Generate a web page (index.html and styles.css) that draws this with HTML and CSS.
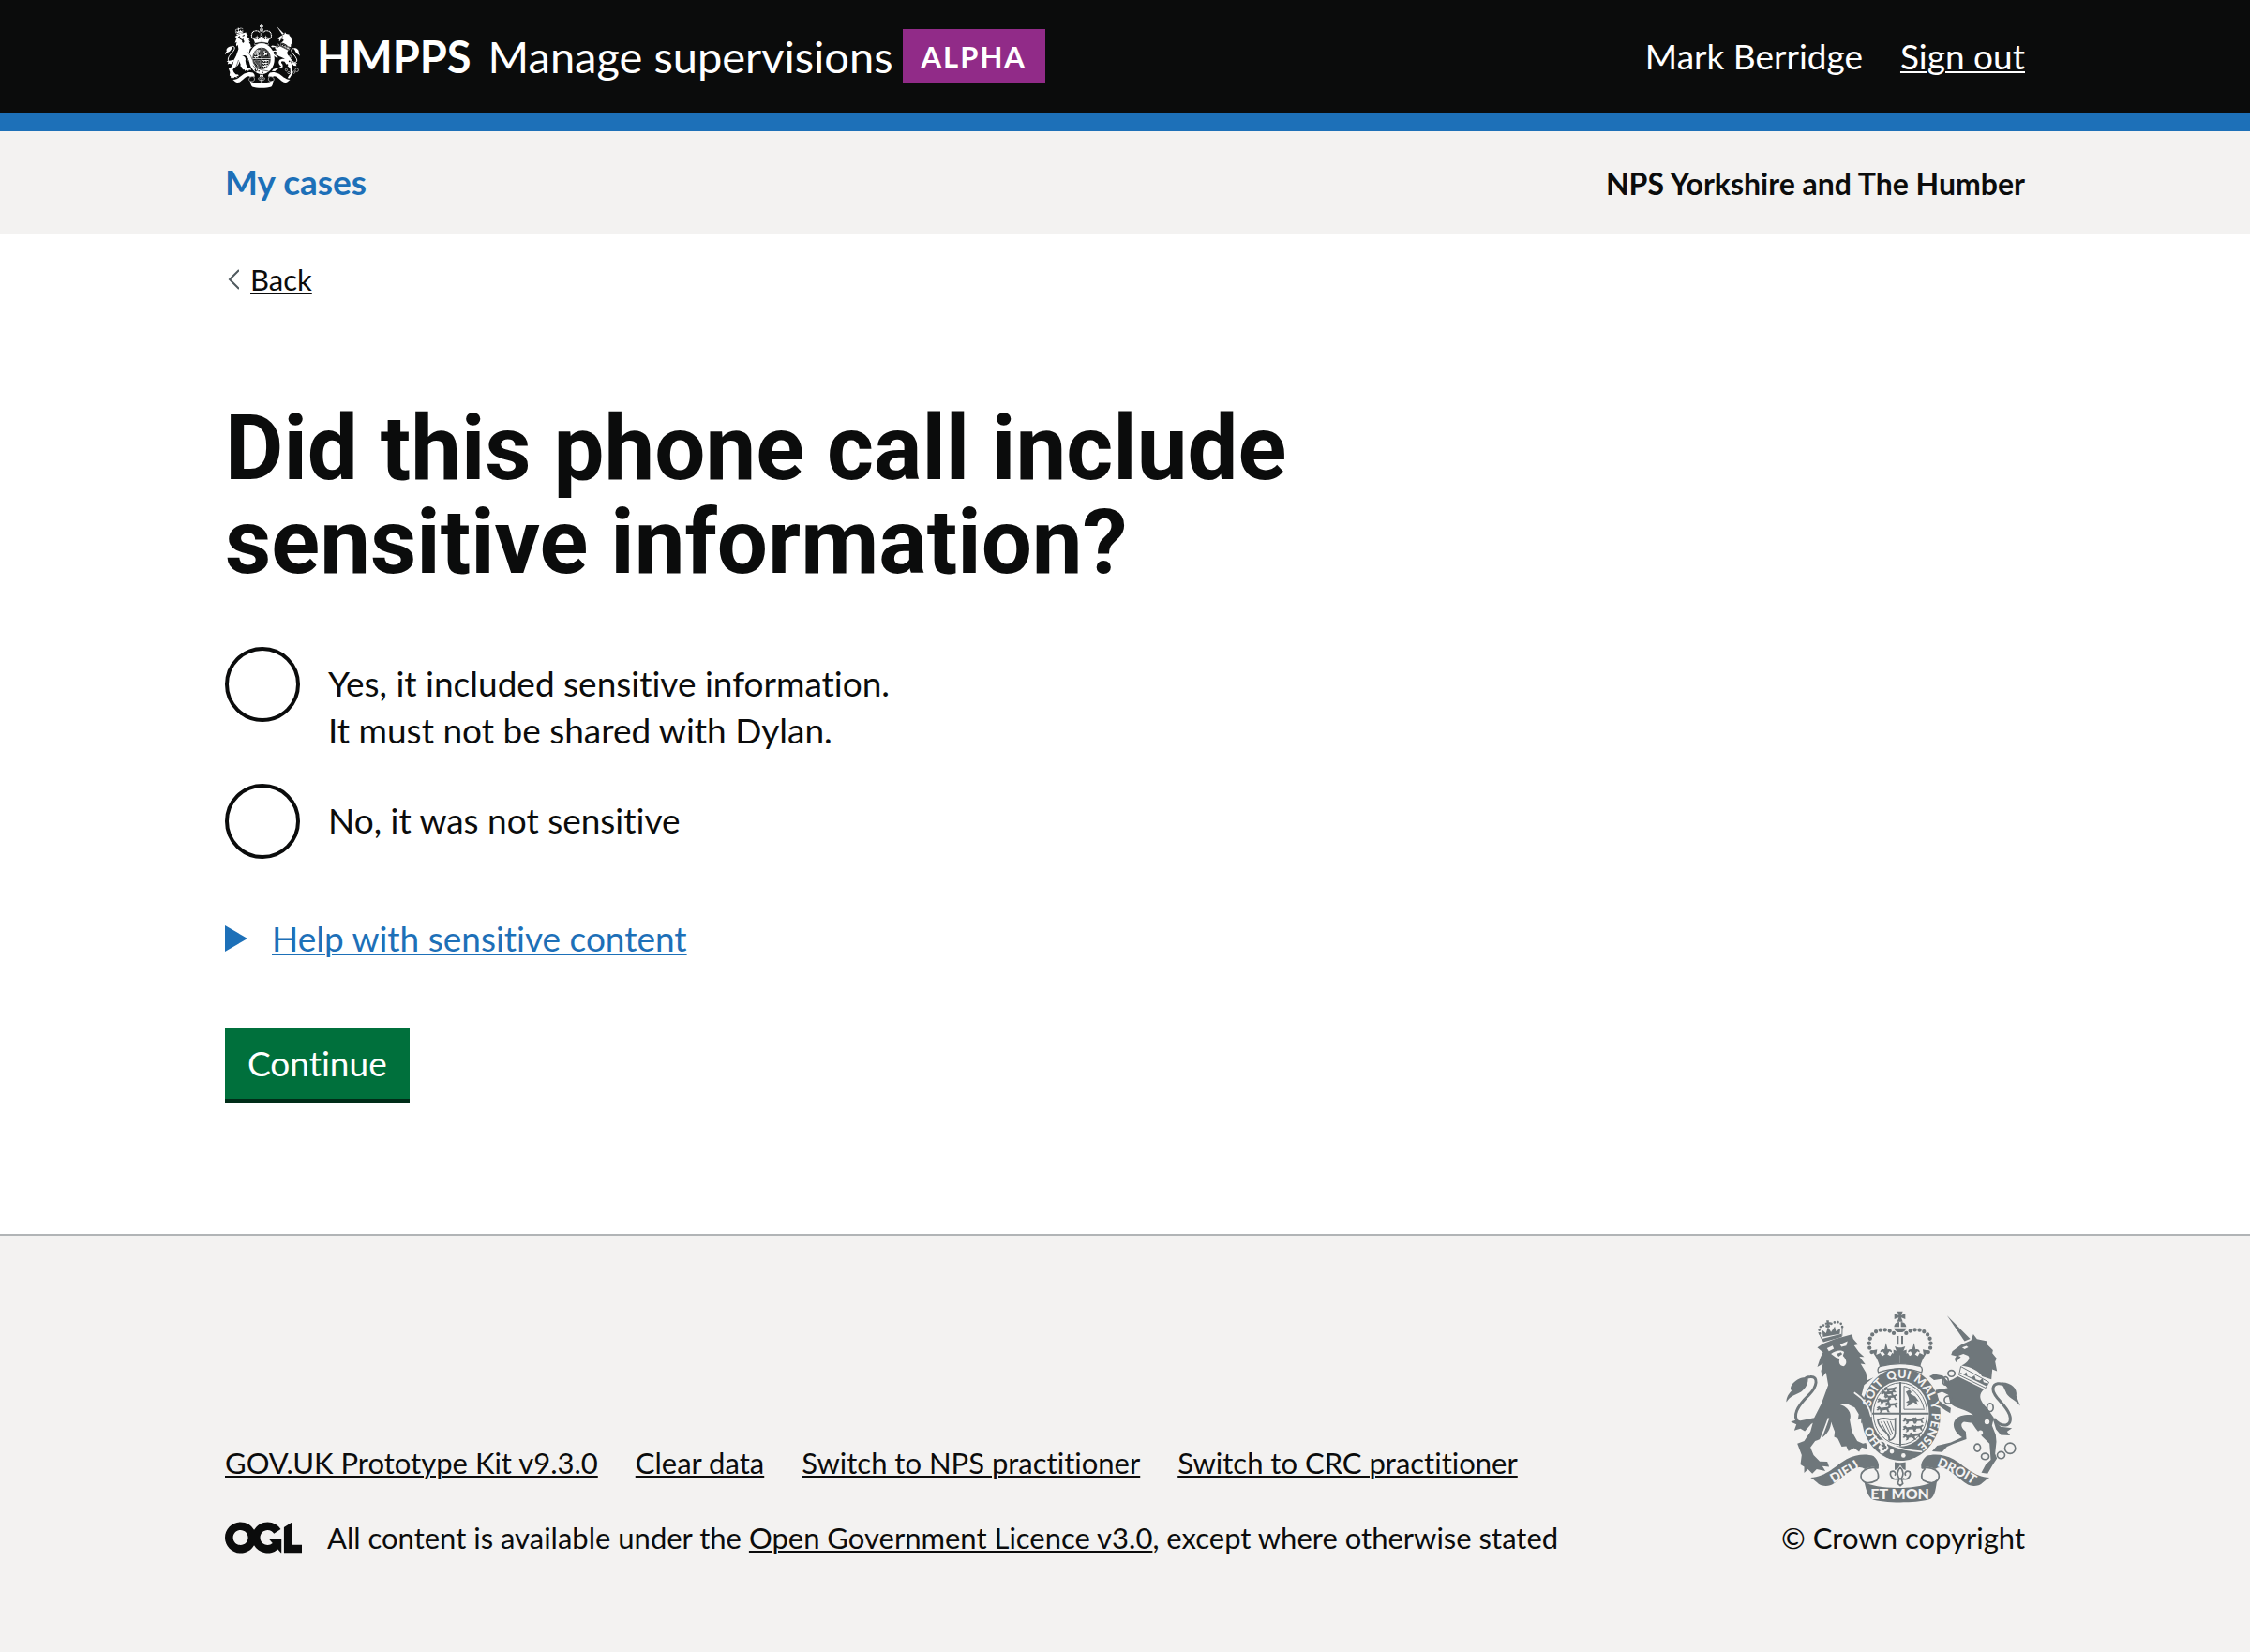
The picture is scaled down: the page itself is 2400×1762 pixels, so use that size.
FILE: index.html
```html
<!DOCTYPE html>
<html lang="en">
<head>
<meta charset="utf-8">
<meta name="viewport" content="width=device-width, initial-scale=1">
<title>Did this phone call include sensitive information? - Manage supervisions</title>
<link rel="stylesheet" href="styles.css">
</head>
<body>

<svg class="sprite" aria-hidden="true">
  <defs>
    <g id="crown-side">
      <path class="pearls" d="M417 124C396 107 352 108 341 142C334 166 341 181 352 190"/>
      <path d="M346 180l18-4-3 17 13-6 6 11 9-6-8-10-7 4c-2-8 6-13 13-10l5-21 6 21c7-3 15 2 13 10l-8-4-6 10 9 5 6-10 12 6-4-14 17 5v57c-28 0-48 2-62 7-3-26-12-46-29-68z"/>
    </g>
    <g id="ribbon-side">
      <path d="M150 587C200 585 235 545 265 528C295 512 330 510 352 518C368 533 371 546 368 557C350 550 335 552 325 560C304 543 280 562 250 587C227 606 215 618 185 612C170 605 165 595 150 587z"/>
      <path class="line5" d="M368 557C330 548 305 570 314 592C322 608 345 606 362 596C372 586 368 568 356 558"/>
    </g>
    <g id="passant">
      <path d="M0 4l8-4 6 5 20-2 8-4 3 4-7 5 2 8 5 3-9 1-4-8-12 1-3 7-8 2 3-5-2-7-6 4-5-2 5-4z"/>
    </g>
    <g id="arms">
      <!-- Crown -->
      <path d="M428 54h18l-5 12 13-4v17l-13-5 5 13h-18l5-13-14 5V62l14 4z"/>
      <path d="M418 104a19 17 0 0 1 17-16v16zM440 88a19 17 0 0 1 17 16h-17zM418 108h39a20 17 0 0 1-39 0z"/>
      <path d="M427 133h6v28h-6zM441 133h6v28h-6zM420 166l12 4h10l12-4-6 15 10-4v18l-42 0v-18l10 4z"/>
      <use href="#crown-side"/>
      <use href="#crown-side" transform="matrix(-1 0 0 1 874 0)"/>
      <path class="crown-band" d="M374 230Q437 214 502 230Q512 236 506 250Q437 226 368 250Q362 236 374 230z"/>
      <!-- Garter and shield -->
      <ellipse cx="440" cy="384" rx="127" ry="149"/>
      <ellipse class="paper" cx="438" cy="382" rx="92" ry="105"/>
      <ellipse class="line3" cx="438" cy="382" rx="86" ry="99"/>
      <path d="M435 280h6v206h-6zM348 379h182v6H348z"/>
      <path class="paper-line" d="M392 474Q440 500 508 504M352 448Q365 470 388 480"/>
      <use href="#passant" transform="translate(376 307)"/>
      <use href="#passant" transform="translate(364 332)"/>
      <use href="#passant" transform="translate(362 358)"/>
      <use href="#passant" transform="translate(386 296) scale(.9)"/>
      <use href="#passant" transform="translate(388 320) scale(.9)"/>
      <use href="#passant" transform="translate(390 345) scale(.9)"/>
      <use href="#passant" transform="translate(446 394)"/>
      <use href="#passant" transform="translate(446 420)"/>
      <use href="#passant" transform="translate(446 446)"/>
      <use href="#passant" transform="translate(474 394) scale(.9)"/>
      <use href="#passant" transform="translate(472 418) scale(.9)"/>
      <use href="#passant" transform="translate(466 442) scale(.9)"/>
      <path class="line3" d="M450 294V368H516M450 294C480 300 506 330 514 366"/>
      <path d="M456 312l12-7 6 8-4 6 16 8 12 16-8-2 4 14-14-10-8 8-14 6 6-10-8-4 10-6-2-10z"/>
      <path class="line5" d="M364 404C388 386 402 408 422 398V446C420 462 406 470 402 466C408 440 372 440 366 404"/>
      <path class="line3" d="M376 408L402 460M386 406L408 452M396 406L413 446M406 406L417 436"/>
      <path class="paper" d="M374 466c14-2 24 8 22 18 8 4 4 18-8 20-4 10-20 6-14-4-10-4-6-18 2-18-8-6-8-12-2-16z"/>
      <path d="M376 472c10 0 14 6 14 12 6 2 6 10-2 12-2 6-10 4-8-2l6-6c-6 2-12-4-8-8l6 0c-4-4-8-4-8-8z"/>
      <circle class="paper" cx="411" cy="503" r="7"/>
      <circle class="paper" cx="448" cy="516" r="7"/>
      <!-- Lion -->
      <path class="line3" d="M189 148L176 122M251 133L252 104"/>
      <path class="pearls-small" d="M180 125C172 98 196 92 206 106C215 86 250 80 252 104"/>
      <path d="M187 142l62-16 2 10-60 17zM190 136l-2-22 12 10 6-20 10 16 12-18 4 16 14-10-2 18zM201 83h8v6h6v7h-6v9h-6v-9h-6v-6h5z"/>
      <path d="M172 170L190 158L228 143L283 128L287 142L303 160L290 163L305 184L322 200L307 199L326 224L311 222L328 250L332 275L352 266L322 290L314 322L340 352L346 392L336 390L330 414L322 400L312 414L313 396L302 402L305 384L292 362L270 352L243 352C270 360 284 380 276 402L283 440L300 470L318 478L328 476L333 495L314 490L306 504L290 492L272 502L265 486L250 488L238 462L226 456L228 440L216 408C216 440 190 462 165 470L150 490L160 515L180 535L204 536L210 552L188 550L198 566L170 560L156 574L142 560L130 572L130 552L118 545L122 515L108 478L130 470L150 440L162 395L185 350L207 290L200 250L188 265L184 245L190 222L172 232L182 202L190 185z"/>
      <path class="paper" d="M203 172l18-8 4 10-16 8zM245 160l24-10-4 14-16 4zM216 190c14-10 30-14 42-6l-4 12c14 14 14 28 2 34-14-2-16-14-12-24l-12-4z"/>
      <path d="M234 190l14-5 4 6-12 8z"/>
      <path class="paper-line" d="M290 314Q338 346 345 392M181 468Q200 420 208 396"/>
      <path class="line9" d="M186 372C165 412 135 425 110 408C90 385 118 348 145 322C172 295 177 262 150 264C142 264 136 266 132 272"/>
      <path d="M128 266C100 270 78 298 90 308C76 322 72 335 73 345C85 325 105 320 120 312C135 300 144 285 142 266z"/>
      <path d="M87 408L105 416L98 436L118 430L132 438L150 418L162 395L118 404L104 402z"/>
      <!-- Unicorn -->
      <path d="M588 68L662 142L644 150z"/>
      <path d="M601 193L605 182L632 162L665 147L672 127L684 143L717 150L714 158L735 178L733 188L747 205L742 215L748 246L733 240L730 272L700 262C690 246 665 232 634 228C656 216 664 204 655 196L640 190L624 196L632 200L616 217L612 206L618 198z"/>
      <path class="paper" d="M636 170l14-5 6 4-12 6z"/>
      <path d="M622 262L706 304C688 322 690 338 716 364L738 395L732 420L744 450L746 472L742 510L748 525L735 545L718 574L698 571L712 545L728 530L724 478L700 455L680 430L668 412L642 408C628 415 634 428 648 440L650 464L610 478L588 488L572 505L540 503L556 485L600 474L636 458C612 442 604 420 612 405C622 386 650 384 672 386C650 368 612 366 598 348L592 322L572 312L556 318L562 340L578 352L600 364L598 380L584 372L562 356L546 335L552 306L590 300L578 286L576 270L546 274L531 262L546 255L574 260L590 278L606 272z"/>
      <path class="line3" d="M632 231L722 281L712 300L626 258z"/>
      <path d="M630 252l84 42 4-9-13-4-3-13-9 8-13-4-4-13-10 7-13-5-3-12-9 7-9-6z"/>
      <g class="chain">
        <ellipse cx="602" cy="253" rx="11" ry="10"/>
        <ellipse cx="583" cy="277" rx="9" ry="13"/>
        <ellipse cx="592" cy="338" rx="13" ry="12"/>
        <ellipse cx="726" cy="362" rx="10" ry="13"/>
        <ellipse cx="685" cy="491" rx="10" ry="12"/>
        <ellipse cx="710" cy="519" rx="12" ry="10"/>
        <ellipse cx="761" cy="515" rx="12" ry="11"/>
        <circle cx="790" cy="493" r="17"/>
      </g>
      <circle class="paper" cx="716" cy="408" r="8"/>
      <circle class="paper" cx="695" cy="443" r="8"/>
      <path class="line9" d="M738 398C760 430 802 425 788 385C775 350 735 330 735 302C738 282 760 282 775 292"/>
      <path d="M762 282C790 280 815 300 810 325L822 357C805 335 782 332 776 312z"/>
      <path d="M735 400L760 424L796 428L780 440L790 452L760 450L745 432z"/>
      <!-- Ribbon and fleur-de-lis -->
      <use href="#ribbon-side"/>
      <use href="#ribbon-side" transform="matrix(-1 0 0 1 874 0)"/>
      <path d="M322 600C360 628 514 628 556 592C552 620 550 645 535 655C490 670 385 670 345 655C330 640 328 620 322 600z"/>
      <path d="M420 537q17 5 35 0v26l-8-3-9-14-9 14-9 3z"/>
      <path class="line5" d="M438 554C424 570 430 580 434 590H442C446 580 452 570 438 554M430 590C414 598 402 580 408 568C420 562 426 574 420 580M446 590C462 598 474 580 468 568C456 562 450 574 456 580M426 592H450M434 592L430 606L438 613L446 606L442 592"/>
    </g>
    <path id="garter-path" d="M440 500A99 116 0 0 1 440 268A99 116 0 0 1 440 500"/>
    <path id="dieu-path" d="M214 610Q256 590 318 548"/>
    <path id="droit-path" d="M549 548Q610 570 676 612"/>
  </defs>
</svg>

<header class="header">
  <div class="container header-row">
    <a class="brand" href="#">
      <svg class="brand-crest" viewBox="72 52 750 616" preserveAspectRatio="none" aria-hidden="true"><use href="#arms"/></svg>
      <span class="brand-org">HMPPS</span>
      <span class="brand-service">Manage supervisions</span>
      <strong class="tag">ALPHA</strong>
    </a>
    <div class="account">
      <span>Mark Berridge</span>
      <a href="#">Sign out</a>
    </div>
  </div>
</header>

<nav class="subnav" aria-label="Primary">
  <div class="container subnav-row">
    <a class="subnav-link" href="#">My cases</a>
    <strong class="subnav-region">NPS Yorkshire and The Humber</strong>
  </div>
</nav>

<div class="container page">
  <a class="back" href="#">
    <svg class="back-arrow" viewBox="0 0 12 22" aria-hidden="true"><path d="M12 1L2 11L12 21"/></svg>
    <span class="back-text">Back</span>
  </a>
  <main>
    <form class="question">
      <fieldset class="fieldset">
        <legend class="legend"><h1 class="heading">Did this phone call include sensitive information?</h1></legend>
        <div class="radios">
          <div class="radio">
            <input class="radio-input" type="radio" id="sensitive-yes" name="sensitive" value="yes">
            <label class="radio-label" for="sensitive-yes">Yes, it included sensitive information.<br>It must not be shared with Dylan.</label>
          </div>
          <div class="radio">
            <input class="radio-input" type="radio" id="sensitive-no" name="sensitive" value="no">
            <label class="radio-label" for="sensitive-no">No, it was not sensitive</label>
          </div>
        </div>
      </fieldset>
      <details class="help">
        <summary class="help-summary"><span class="help-text">Help with sensitive content</span></summary>
      </details>
      <button class="button" type="submit">Continue</button>
    </form>
  </main>
</div>

<footer class="footer">
  <div class="container footer-row">
    <div class="footer-main">
      <ul class="footer-links">
        <li><a href="#">GOV.UK Prototype Kit v9.3.0</a></li>
        <li><a href="#">Clear data</a></li>
        <li><a href="#">Switch to NPS practitioner</a></li>
        <li><a href="#">Switch to CRC practitioner</a></li>
      </ul>
      <div class="licence">
        <svg class="ogl" viewBox="0 0 483.2 195.7" role="img" aria-label="Open Government Licence"><path d="M421.500 142.800V.100l-50.700 32.300v161.100h112.400v-50.700zm-122.300-9.600A47.120 47.120 0 0 1 221 97.800c0-26 21.100-47.100 47.100-47.100 16.700 0 31.400 8.700 39.700 21.800l42.700-27.200A97.630 97.630 0 0 0 268.100 0c-36.500 0-68.300 20.100-85.100 49.700A98 98 0 0 0 97.800 0C43.900 0 0 43.900 0 97.800s43.900 97.800 97.800 97.800c36.500 0 68.300-20.100 85.100-49.700a97.760 97.760 0 0 0 149.600 25.400l19.400 22.200h3v-87.800h-80l24.300 27.500zM97.800 145c-26 0-47.100-21.100-47.100-47.100s21.100-47.100 47.100-47.100 47.100 21.100 47.100 47.100S123.800 145 97.800 145"/></svg>
        <span>All content is available under the <a href="#">Open Government Licence v3.0</a>, except where otherwise stated</span>
      </div>
    </div>
    <a class="copyright" href="#">
      <svg class="copyright-crest" viewBox="72 52 750 616" aria-hidden="true">
        <use href="#arms"/>
        <g class="motto">
          <text><textPath href="#garter-path" startOffset="15%">HO</textPath></text>
          <text><textPath href="#garter-path" startOffset="35%">SOIT</textPath></text>
          <text><textPath href="#garter-path" startOffset="49%">QUI</textPath></text>
          <text><textPath href="#garter-path" startOffset="62%">MAL</textPath></text>
          <text><textPath href="#garter-path" startOffset="71%">Y</textPath></text>
          <text><textPath href="#garter-path" startOffset="83%">PENSE</textPath></text>
          <text class="motto-side"><textPath href="#dieu-path" startOffset="50%">DIEU</textPath></text>
          <text class="motto-side"><textPath href="#droit-path" startOffset="50%">DROIT</textPath></text>
          <text class="motto-base" x="437" y="657">ET MON</text>
        </g>
      </svg>
      <span>© Crown copyright</span>
    </a>
  </div>
</footer>

</body>
</html>
```
FILE: styles.css
```css
:root {
  --ink: #0b0c0c;
  --blue: #1d70b8;
  --grey: #f3f2f1;
  --crest-grey: #6f777b;
}

* { box-sizing: border-box; }

body {
  display: flex;
  flex-direction: column;
  min-height: 100vh;
  margin: 0;
  background: #fff;
  color: var(--ink);
  font-family: Lato, "Liberation Sans", sans-serif;
  font-size: 37px;
  line-height: 50px;
  font-variant-ligatures: none;
}

a {
  color: inherit;
  text-decoration-thickness: 2px;
  text-underline-offset: 2px;
}

.sprite {
  position: absolute;
  width: 0;
  height: 0;
}

.container {
  width: 100%;
  max-width: 2000px;
  margin: 0 auto;
  padding-left: 40px;
  padding-right: 40px;
}

/* Coat of arms */
.paper { fill: var(--paper); }
.paper-line { fill: none; stroke: var(--paper); stroke-width: 5; }
.crown-band { fill: var(--paper); stroke: currentColor; stroke-width: 4; }
.line3, .line5, .line9, .chain, .pearls, .pearls-small { fill: none; stroke: currentColor; }
.line3 { stroke-width: 3; }
.line5, .chain { stroke-width: 5; }
.line9 { stroke-width: 9; }
.pearls { stroke-width: 13; stroke-linecap: round; stroke-dasharray: 0 15; }
.pearls-small { stroke-width: 8; stroke-linecap: round; stroke-dasharray: 0 11; }
.motto {
  fill: var(--paper);
  font-size: 38px;
  font-weight: 900;
  text-anchor: middle;
}
.motto-side { font-size: 42px; }
.motto-base { font-size: 48px; }

/* Header */
.header {
  background: var(--ink);
  border-bottom: 20px solid var(--blue);
  color: #fff;
}
.header-row {
  display: flex;
  flex-wrap: wrap;
  align-items: center;
  justify-content: space-between;
  min-height: 120px;
}
.brand {
  display: flex;
  align-items: center;
  font-size: 47px;
  line-height: 56px;
  text-decoration: none;
}
.brand-crest {
  --paper: var(--ink);
  width: 80px;
  height: 68px;
  margin-right: 18px;
  fill: currentColor;
}
.brand-org {
  margin-right: 18px;
  font-weight: 700;
}
.brand-service { margin-right: 10px; }
.tag {
  padding: 9px 20px;
  background: #912b88;
  font-size: 31px;
  font-weight: 700;
  line-height: 40px;
  letter-spacing: 2px;
}
.account {
  display: flex;
  gap: 40px;
}

/* Sub navigation */
.subnav { background: var(--grey); }
.subnav-row {
  display: flex;
  flex-wrap: wrap;
  align-items: baseline;
  justify-content: space-between;
  padding-top: 29px;
  padding-bottom: 31px;
}
.subnav-link {
  color: var(--blue);
  font-weight: 700;
  text-decoration: none;
}
.subnav-region {
  font-size: 32px;
  line-height: 40px;
}

/* Question */
.page {
  padding-top: 28px;
  padding-bottom: 140px;
}
.back {
  display: flex;
  align-items: center;
  gap: 12px;
  width: fit-content;
  padding-left: 3px;
  font-size: 31px;
  line-height: 40px;
  text-decoration: none;
}
.back-arrow {
  width: 12px;
  height: 22px;
  fill: none;
  stroke: #505a5f;
  stroke-width: 2;
}
.back-text {
  text-decoration: underline 2px;
  text-underline-offset: 2px;
}
.question {
  max-width: 1280px;
  margin-top: 110px;
}
.fieldset {
  min-width: 0;
  margin: 0 0 60px;
  padding: 0;
  border: 0;
}
.legend { padding: 0; }
.heading {
  margin: 0 0 62px;
  font-family: Roboto, "Liberation Sans", sans-serif;
  font-size: 96px;
  font-weight: 700;
  line-height: 100px;
}
.radios {
  display: flex;
  flex-direction: column;
  gap: 20px;
}
.radio {
  display: flex;
  align-items: flex-start;
  gap: 30px;
  min-height: 80px;
}
.radio-input {
  appearance: none;
  flex: none;
  width: 80px;
  height: 80px;
  margin: 0;
  border: 4px solid var(--ink);
  border-radius: 50%;
  background: transparent;
}
.radio-input:checked {
  background: radial-gradient(var(--ink) 20px, transparent 21px);
}
.radio-label { padding: 14px 0 12px; }
.help { margin-bottom: 70px; }
.help-summary {
  display: flex;
  align-items: center;
  gap: 26px;
  width: fit-content;
  color: var(--blue);
  list-style: none;
  cursor: pointer;
}
.help-summary::before {
  content: "";
  border: solid transparent;
  border-width: 14px 0 14px 24px;
  border-left-color: currentColor;
}
.help-text {
  text-decoration: underline 2px;
  text-underline-offset: 2px;
}
.button {
  display: block;
  margin: 0 0 4px;
  padding: 13px 24px;
  border: 0;
  background: #00703c;
  box-shadow: 0 4px 0 #002d18;
  color: #fff;
  font: inherit;
  cursor: pointer;
}

/* Footer */
.footer {
  flex-grow: 1;
  padding: 80px 0;
  border-top: 2px solid #b1b4b6;
  background: var(--grey);
  font-size: 31px;
  line-height: 40px;
}
.footer-row {
  display: flex;
  align-items: flex-end;
  justify-content: space-between;
}
.footer-main {
  display: flex;
  flex-direction: column;
  gap: 40px;
}
.footer-links {
  display: flex;
  flex-wrap: wrap;
  column-gap: 40px;
  margin: 0;
  padding: 0;
  list-style: none;
}
.licence {
  display: flex;
  align-items: center;
  gap: 27px;
}
.ogl {
  flex: none;
  width: 82px;
  height: 34px;
  fill: currentColor;
}
.copyright {
  display: flex;
  flex-direction: column;
  align-items: center;
  gap: 17px;
  text-decoration: none;
}
.copyright-crest {
  --paper: var(--grey);
  width: 250px;
  height: 205px;
  color: var(--crest-grey);
  fill: currentColor;
}
```
